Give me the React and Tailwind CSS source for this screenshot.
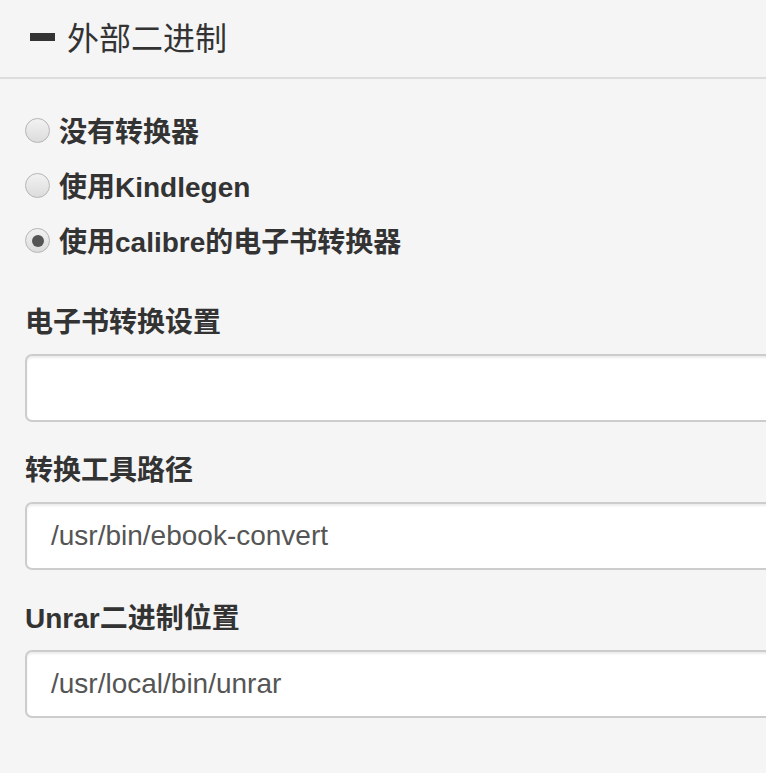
function Radio({ checked, label }) {
  return (
    <div className="flex items-center h-[55px]">
      <span className="w-[25px] h-[25px] rounded-full border border-[#b5b5b5] bg-gradient-to-b from-[#f2f2f2] to-[#dcdcdc] flex items-center justify-center shrink-0">
        {checked && <span className="w-[12px] h-[12px] rounded-full bg-[#555]"></span>}
      </span>
      <span className="ml-[9px] text-[28px] leading-[34px] font-bold text-[#333] mt-[5px]">{label}</span>
    </div>
  );
}

function Field({ label, value }) {
  return (
    <div className="mb-[32px]">
      <div className="text-[28px] font-bold text-[#333] leading-[34px] mb-[14px]">{label}</div>
      <div className="w-[800px] h-[68px] rounded-[7px] border-2 border-[#cccccc] bg-white shadow-[inset_0_2px_2px_rgba(0,0,0,0.075)] flex items-center pl-[24px] text-[28px] text-[#555]">
        {value}
      </div>
    </div>
  );
}

function App() {
  return (
    <div
      className="min-h-screen bg-[#f5f5f5] overflow-hidden"
      style={{ fontFamily: '"Liberation Sans", "Noto Sans CJK SC", sans-serif' }}
    >
      <div className="h-[79px] border-b-2 border-[#dddddd] flex items-center pl-[30px]">
        <span className="w-[25px] h-[8px] bg-[#333] mt-[-3px]"></span>
        <span className="ml-[12px] text-[32px] text-[#333]">外部二进制</span>
      </div>
      <div className="pl-[25px] pt-[24px]">
        <Radio label="没有转换器" />
        <Radio label="使用Kindlegen" />
        <Radio checked label="使用calibre的电子书转换器" />
        <div className="mt-[38px]">
          <Field label="电子书转换设置" value="" />
          <Field label="转换工具路径" value="/usr/bin/ebook-convert" />
          <Field label="Unrar二进制位置" value="/usr/local/bin/unrar" />
        </div>
      </div>
    </div>
  );
}

export default App;
